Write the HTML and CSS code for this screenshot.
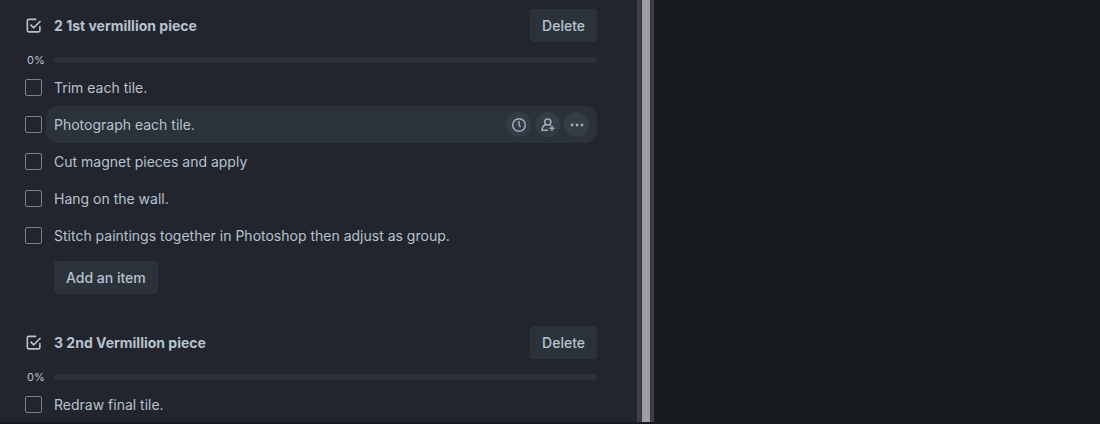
FILE: index.html
```html
<!DOCTYPE html>
<html lang="en">
<head>
<meta charset="utf-8">
<meta name="viewport" content="width=device-width, initial-scale=1">
<title>Checklists</title>
<link rel="stylesheet" href="styles.css">
</head>
<body>
<svg class="sprite" aria-hidden="true">
  <symbol id="icon-checklist" viewBox="0 0 16 16">
    <path d="M10.600 2.200H3.400Q2.200 2.200 2.200 3.400V12.800Q2.200 14 3.400 14H12.800Q14 14 14 12.800V8.500M5.200 7.200L8.200 10.200L14.600 3.800" fill="none" stroke="currentColor" stroke-width="1.500"/>
  </symbol>
</svg>
<div class="app">
  <main class="card">
    <section class="checklist">
      <header class="checklist-header">
        <svg class="checklist-icon" aria-hidden="true"><use href="#icon-checklist"/></svg>
        <h2 class="checklist-title">2 1st vermillion piece</h2>
        <button class="button" type="button">Delete</button>
      </header>
      <div class="progress">
        <span class="progress-label">0%</span>
        <div class="progress-track" role="progressbar" aria-label="2 1st vermillion piece" aria-valuenow="0" aria-valuemin="0" aria-valuemax="100"></div>
      </div>
      <ul class="items">
        <li class="item"><input class="checkbox" type="checkbox" id="trim"><div class="item-body"><label for="trim">Trim each tile.</label></div></li>
        <li class="item"><input class="checkbox" type="checkbox" id="photograph">
          <div class="item-body item-active">
            <label for="photograph">Photograph each tile.</label>
            <div class="actions">
              <button class="action" type="button" aria-label="Due date">
                <svg class="action-icon" viewBox="0 0 16 16" aria-hidden="true"><circle cx="8" cy="8" r="6.300"/><path d="M8 4V8L9.500 10"/></svg>
              </button>
              <button class="action" type="button" aria-label="Assign">
                <svg class="action-icon" viewBox="0 0 16 16" aria-hidden="true"><circle cx="7.800" cy="5" r="3.100"/><path d="M5.800 7.500C3.300 8.600 2.100 10.400 2.100 13.200H8M9.400 7.500L10.800 8.600M12 8.700V13.900M9.400 11.300H14.600"/></svg>
              </button>
              <button class="action" type="button" aria-label="More">
                <svg class="action-icon action-dots" viewBox="0 0 16 16" aria-hidden="true"><circle cx="3" cy="8" r="1.400"/><circle cx="8" cy="8" r="1.400"/><circle cx="13" cy="8" r="1.400"/></svg>
              </button>
            </div>
          </div>
        </li>
        <li class="item"><input class="checkbox" type="checkbox" id="magnets"><div class="item-body"><label for="magnets">Cut magnet pieces and apply</label></div></li>
        <li class="item"><input class="checkbox" type="checkbox" id="hang"><div class="item-body"><label for="hang">Hang on the wall.</label></div></li>
        <li class="item"><input class="checkbox" type="checkbox" id="stitch"><div class="item-body"><label for="stitch">Stitch paintings together in Photoshop then adjust as group.</label></div></li>
      </ul>
      <button class="button add-button" type="button">Add an item</button>
    </section>
    <section class="checklist">
      <header class="checklist-header">
        <svg class="checklist-icon" aria-hidden="true"><use href="#icon-checklist"/></svg>
        <h2 class="checklist-title">3 2nd Vermillion piece</h2>
        <button class="button" type="button">Delete</button>
      </header>
      <div class="progress">
        <span class="progress-label">0%</span>
        <div class="progress-track" role="progressbar" aria-label="3 2nd Vermillion piece" aria-valuenow="0" aria-valuemin="0" aria-valuemax="100"></div>
      </div>
      <ul class="items">
        <li class="item"><input class="checkbox" type="checkbox" id="redraw"><div class="item-body"><label for="redraw">Redraw final tile.</label></div></li>
      </ul>
    </section>
  </main>
  <div class="scrollbar"><div class="scrollbar-thumb"></div></div>
  <div class="backdrop"></div>
</div>
</body>
</html>
```
FILE: styles.css
```css
* {
  box-sizing: border-box;
}

body {
  margin: 0;
  background: #171b1e;
  color: #b6c2cf;
  font: 14px/20px Inter, "Liberation Sans", sans-serif;
}

.sprite {
  position: absolute;
  width: 0;
  height: 0;
}

.app {
  display: grid;
  grid-template-columns: minmax(0, 637fr) 17px minmax(0, 446fr);
  height: 100vh;
  overflow: hidden;
  border-bottom: 2px solid #1b1722;
}

.card {
  display: flex;
  flex-direction: column;
  gap: 32px;
  padding: 9px 40px 0 25px;
  background: #22252d;
  overflow: hidden;
}

.checklist-header {
  display: grid;
  grid-template-columns: 17px minmax(0, 1fr) auto;
  column-gap: 12px;
  align-items: center;
}

.checklist-icon {
  width: 17px;
  height: 17px;
}

.checklist-title {
  margin: 0;
  font-size: 14px;
  font-weight: 700;
}

.button {
  height: 33px;
  padding: 0 12px;
  border: 0;
  border-radius: 3px;
  background: #2b323a;
  color: inherit;
  font: inherit;
  font-weight: 500;
}

.progress {
  display: grid;
  grid-template-columns: 17px minmax(0, 1fr);
  column-gap: 12px;
  align-items: center;
  height: 19px;
  margin-top: 8px;
}

.progress-label {
  padding-left: 2px;
  font-size: 11px;
  white-space: nowrap;
}

.progress-track {
  height: 6px;
  border-radius: 3px;
  background: #2b323a;
}

.items {
  margin: 0;
  padding: 0;
  list-style: none;
}

.item {
  display: grid;
  grid-template-columns: 17px minmax(0, 1fr);
  column-gap: 4px;
  align-items: center;
}

.checkbox {
  appearance: none;
  width: 17px;
  height: 17px;
  margin: 0;
  border: 1px solid #738496;
  border-radius: 2px;
}

.item-body {
  display: flex;
  align-items: center;
  justify-content: space-between;
  min-height: 37px;
  padding: 0 8px;
  border-radius: 12px;
}

.item-active {
  background: #2b323a;
}

.actions {
  display: flex;
  gap: 4px;
}

.action {
  display: grid;
  place-items: center;
  width: 25px;
  height: 25px;
  padding: 0;
  border: 0;
  border-radius: 50%;
  background: #353c45;
  color: #9fadbc;
}

.action-icon {
  width: 16px;
  height: 16px;
  fill: none;
  stroke: currentColor;
  stroke-width: 1.5;
}

.action-dots {
  fill: currentColor;
  stroke: none;
}

.add-button {
  margin: 7px 0 0 29px;
}

.scrollbar {
  display: flex;
  padding: 0 4px 0 5px;
  background: #3d4045;
}

.scrollbar-thumb {
  flex: 1;
  background: #9f9f9f;
  box-shadow: 0 0 0 1px #303338;
}

.backdrop {
  background: #171b1e;
}
```
